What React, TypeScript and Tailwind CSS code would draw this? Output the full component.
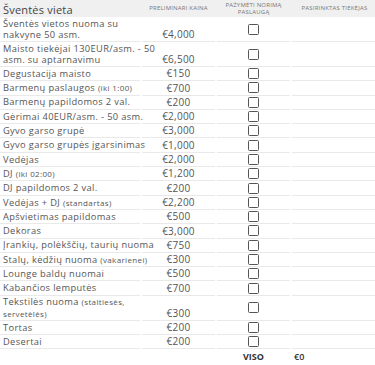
const small = "text-[8px]";

const rows: { lines: React.ReactNode[]; price: string }[] = [
  { lines: ["Šventės vietos nuoma su", "nakvyne 50 asm."], price: "€4,000" },
  { lines: ["Maisto tiekėjai 130EUR/asm. - 50", "asm. su aptarnavimu"], price: "€6,500" },
  { lines: ["Degustacija maisto"], price: "€150" },
  { lines: [<>Barmenų paslaugos <span className={small}>(iki 1:00)</span></>], price: "€700" },
  { lines: ["Barmenų papildomos 2 val."], price: "€200" },
  { lines: ["Gėrimai 40EUR/asm. - 50 asm."], price: "€2,000" },
  { lines: ["Gyvo garso grupė"], price: "€3,000" },
  { lines: ["Gyvo garso grupės įgarsinimas"], price: "€1,000" },
  { lines: ["Vedėjas"], price: "€2,000" },
  { lines: [<>DJ <span className={small}>(iki 02:00)</span></>], price: "€1,200" },
  { lines: ["DJ papildomos 2 val."], price: "€200" },
  { lines: [<>Vedėjas + DJ <span className={small}>(standartas)</span></>], price: "€2,200" },
  { lines: ["Apšvietimas papildomas"], price: "€500" },
  { lines: ["Dekoras"], price: "€3,000" },
  { lines: ["Įrankių, polėkščių, taurių nuoma"], price: "€750" },
  { lines: [<>Stalų, kėdžių nuoma <span className={small}>(vakarienei)</span></>], price: "€300" },
  { lines: ["Lounge baldų nuomai"], price: "€500" },
  { lines: ["Kabančios lemputės"], price: "€700" },
  { lines: [<>Tekstilės nuoma <span className={small}>(staltiesės,</span></>, <span className={small}>servetėlės)</span>], price: "€300" },
  { lines: ["Tortas"], price: "€200" },
  { lines: ["Desertai"], price: "€200" },
];

const cols = "grid grid-cols-[140px_73px_73px_85px] gap-x-[2px]";
const head = "text-center text-[6px] leading-[7px] uppercase tracking-[0.2px] text-[#777] self-center";

export default function App() {
  return (
    <div className="w-[375px] h-[365px] overflow-hidden bg-white text-[#555]" style={{ fontFamily: '"Open Sans", "Liberation Sans", sans-serif' }}>
      <div className={`${cols} bg-[#f0f0f0] h-[17px] items-end`}>
        <div className="pl-[3px] text-[11px] leading-[12px] pb-[1px] tracking-[0.2px] text-[#444]">Šventės vieta</div>
        <div className={head}>Preliminari kaina</div>
        <div className={head}>
          <span className="block">Pažymėti norimą</span>
          <span className="block">paslaugą</span>
        </div>
        <div className={head}>Pasirinktas tiekėjas</div>
      </div>
      {rows.map((r, i) => (
        <div key={i} className={`${cols} ${r.lines.length > 1 ? "h-[25px]" : "h-[14.3px]"}`}>
          <div className="pl-[3px] text-[9.3px] tracking-[0.35px] border-b border-[#e9e9e9] flex flex-col justify-center whitespace-nowrap">
            {r.lines.map((l, j) => (
              <span key={j} className="block leading-[12px] h-[11.5px]">{l}</span>
            ))}
          </div>
          <div className="text-center text-[10px] leading-[10px] tracking-[0.25px] pb-[2px] border-b border-[#e9e9e9] flex items-end justify-center">
            {r.price}
          </div>
          <div className="border-b border-[#e9e9e9] flex items-center justify-center">
            <span className="block w-[11px] h-[11px] border-[1.5px] border-[#555] rounded-[1.5px]" />
          </div>
          <div className="border-b border-[#e9e9e9]" />
        </div>
      ))}
      <div className={`${cols} h-[15px] items-center`}>
        <div />
        <div />
        <div className="text-center text-[9px] leading-[12px] font-bold text-[#333]">VISO</div>
        <div className="pl-[2px] text-[9px] leading-[12px] font-semibold text-[#333]">€0</div>
      </div>
    </div>
  );
}
